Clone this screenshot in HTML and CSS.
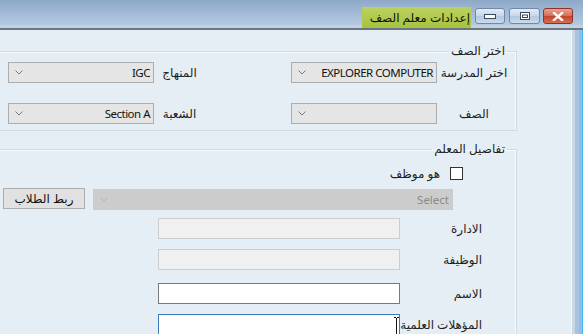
FILE: index.html
```html
<!DOCTYPE html>
<html lang="ar" dir="rtl">
<head>
  <meta charset="UTF-8" />
  <title>إعدادات معلم الصف</title>
  <link rel="stylesheet" href="styles.css">
</head>
<body>

  <div class="window">
    <header class="titlebar">
      <span class="cap-btn close">
        <svg width="12" height="9" viewBox="0 0 12 9"><path d="M2 1 L10 8 M10 1 L2 8" stroke="#fff" stroke-width="2.4" stroke-linecap="square"/></svg>
      </span>
      <span class="cap-btn max">
        <svg width="10" height="8" viewBox="0 0 10 8"><rect x="0.5" y="0.5" width="9" height="7" fill="#fff" stroke="#3a4a5e"/><rect x="2.5" y="3" width="5" height="2.5" fill="none" stroke="#3a4a5e"/></svg>
      </span>
      <span class="cap-btn min">
        <svg width="12" height="5" viewBox="0 0 12 5"><rect x="0.5" y="0.5" width="11" height="4" fill="#fff" stroke="#3a4a5e"/></svg>
      </span>
      <div class="title">إعدادات معلم الصف</div>
    </header>

    <div class="client">
      <div class="edge"></div>
      <div class="content">

        <fieldset class="group">
          <legend>اختر الصف</legend>
          <div class="pick-grid">
            <label>اختر المدرسة</label>
            <div class="combo"><span>EXPLORER COMPUTER</span><svg class="chev" width="8" height="5" viewBox="0 0 8 5"><path d="M0.5 0.5 L4 4 L7.5 0.5" fill="none" stroke="#7a7a7a"/></svg></div>
            <span></span>
            <label>المنهاج</label>
            <div class="combo"><span>IGC</span><svg class="chev" width="8" height="5" viewBox="0 0 8 5"><path d="M0.5 0.5 L4 4 L7.5 0.5" fill="none" stroke="#7a7a7a"/></svg></div>

            <label>الصف</label>
            <div class="combo"><span></span><svg class="chev" width="8" height="5" viewBox="0 0 8 5"><path d="M0.5 0.5 L4 4 L7.5 0.5" fill="none" stroke="#7a7a7a"/></svg></div>
            <span></span>
            <label>الشعبة</label>
            <div class="combo"><span>Section A</span><svg class="chev" width="8" height="5" viewBox="0 0 8 5"><path d="M0.5 0.5 L4 4 L7.5 0.5" fill="none" stroke="#7a7a7a"/></svg></div>
          </div>
        </fieldset>

        <fieldset class="group teacher">
          <legend>تفاصيل المعلم</legend>

          <div class="check-row">
            <span class="check"></span>
            <span class="check-label">هو موظف</span>
          </div>

          <div class="link-row">
            <div class="combo disabled"><span>Select</span><svg class="chev" width="8" height="5" viewBox="0 0 8 5"><path d="M0.5 0.5 L4 4 L7.5 0.5" fill="none" stroke="#b4b4b4"/></svg></div>
            <button class="btn">ربط الطلاب</button>
          </div>

          <div class="field first">
            <label>الادارة</label>
            <input type="text" class="text" disabled>
          </div>
          <div class="field">
            <label>الوظيفة</label>
            <input type="text" class="text" disabled>
          </div>
          <div class="field name">
            <label>الاسم</label>
            <input type="text" class="text editable">
          </div>
          <div class="field">
            <label>المؤهلات العلمية</label>
            <div class="input-wrap">
              <input type="text" class="text focus">
              <svg class="ibeam" width="5" height="18" viewBox="0 0 5 18"><path d="M0 0.5 H2 M3 0.5 H5 M2.5 1 V17 M0 17.5 H2 M3 17.5 H5" stroke="#111" fill="none"/></svg>
            </div>
          </div>
        </fieldset>

      </div>
    </div>
  </div>

</body>
</html>
```

FILE: styles.css
```css
* {
  margin: 0;
  padding: 0;
  box-sizing: border-box;
}

html, body {
  width: 100%;
  height: 100%;
  overflow: hidden;
}

body {
  font-family: "Noto Sans", "DejaVu Sans", sans-serif;
  font-size: 12px;
  color: #1e1e1e;
  background: #e6eef5;
  direction: rtl;
}

.window {
  height: 334px;
  display: flex;
  flex-direction: column;
}

/* title bar */

.titlebar {
  flex: none;
  height: 30px;
  display: flex;
  align-items: flex-start;
  padding-right: 10px;
  background: linear-gradient(#8ea9c8, #b4cae3 25px, #c3d1dd 25px, #c3d1dd 28px);
  border-bottom: 2px solid #6b7682;
}

.cap-btn {
  width: 30px;
  height: 16px;
  margin-top: 8px;
  display: flex;
  align-items: center;
  justify-content: center;
  border: 1px solid #7189a8;
  border-radius: 3px;
  background: linear-gradient(#e3ebf5, #c6d6ea 50%, #b2c7e1 51%, #cbdaec);
}

.cap-btn.close {
  background: linear-gradient(#eaa391, #d66b55 50%, #c4432b 51%, #d86d52);
  border-color: #8b3427;
}

.cap-btn.max {
  width: 31px;
  margin-right: 3px;
}

.cap-btn.min {
  margin-right: 4px;
}

.title {
  margin: 7px 4px 0 0;
  height: 21px;
  line-height: 21px;
  padding: 0 1px 0 8px;
  white-space: nowrap;
  color: #111;
  background: linear-gradient(#bbd25e, #a7c23f);
}

/* client area */

.client {
  flex: 1;
  display: flex;
  min-height: 0;
}

.edge {
  flex: none;
  width: 12px;
  background: linear-gradient(to left, #3cbcf6 0 1px, #92bde6 1px 4px, #a9c3de 4px 8px, #c9d7e5 8px 11px, #f5f8fb 11px);
}

.content {
  flex: 1;
  overflow: hidden;
}

.group {
  margin: 13px 54px 0 -10px;
  padding: 0 5px 0 0;
  border: 1px solid #d0dae3;
  box-shadow: inset -1px 1px 0 #f7fafc;
}

.group legend {
  margin-right: 4px;
  padding: 0 2px;
  line-height: 16px;
}

.group.teacher {
  margin-top: 10px;
  padding-bottom: 40px;
}

.pick-grid {
  display: grid;
  grid-template-columns: 74px 146px 86px 51px 146px;
  grid-auto-rows: 21px;
  row-gap: 20px;
  align-items: center;
  padding: 3px 0 6px;
}

.pick-grid label {
  text-align: center;
}

.combo {
  height: 21px;
  display: flex;
  align-items: center;
  padding-right: 3px;
  border: 1px solid #adadad;
  background: #e5e5e5;
  white-space: nowrap;
  font-size: 11.5px;
  letter-spacing: -0.5px;
  color: #111;
}

.combo .chev {
  margin-right: auto;
  margin-left: 6px;
}

.combo.disabled {
  width: 360px;
  background: #cccccc;
  border-color: #cccccc;
  color: #8a8a8a;
  letter-spacing: 0;
}

/* teacher details */

.check-row {
  display: flex;
  align-items: center;
  height: 13px;
  margin-top: 10px;
  padding-right: 48px;
}

.check {
  width: 13px;
  height: 13px;
  border: 1px solid #333;
  background: #fff;
}

.check-label {
  margin-right: 10px;
}

.link-row {
  display: flex;
  align-items: flex-start;
  margin-top: 9px;
  padding-right: 58px;
}

.btn {
  width: 82px;
  height: 21px;
  margin: -1px 8px 0 0;
  border: 1px solid #adadad;
  background: #e1e1e1;
  font: inherit;
  color: #111;
}

.field {
  display: flex;
  align-items: center;
  height: 21px;
  margin-top: 10px;
  padding-right: 29px;
}

.field.first {
  margin-top: 8px;
}

.field.name {
  margin-top: 13px;
}

.field label {
  width: 82px;
  white-space: nowrap;
}

.text {
  width: 242px;
  height: 21px;
  border: 1px solid #cdcdcd;
  background: #f0f0f0;
  font: inherit;
  outline: none;
}

.text.editable {
  background: #fff;
  border-color: #7a7a7a;
}

.text.focus {
  background: #fff;
  border-color: #3c7bb9;
}

.input-wrap {
  position: relative;
}

.ibeam {
  position: absolute;
  right: 1px;
  top: 3px;
}
```
